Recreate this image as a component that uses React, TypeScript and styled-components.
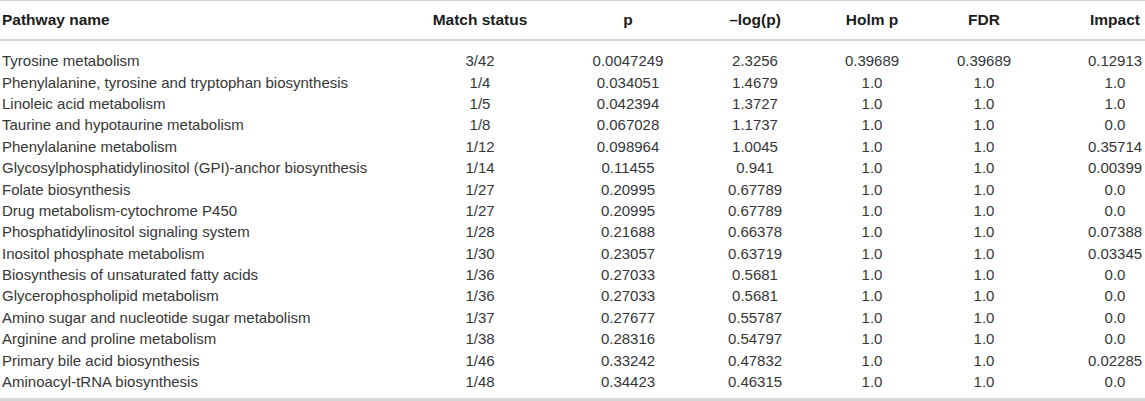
import React from "react";
import styled, { createGlobalStyle } from "styled-components";

const GlobalStyle = createGlobalStyle`
  html, body { margin: 0; padding: 0; background: #ffffff; }
  body { font-family: "Liberation Sans", Arial, Helvetica, sans-serif; }
`;

const COLS = "377px 206px 90px 164px 70px 154px 84px";

const Table = styled.div`
  width: 1145px;
  border-top: 1px solid #cfcfcf;
  border-bottom: 3px solid #d6d6d6;
`;

const HeaderRow = styled.div`
  display: grid;
  grid-template-columns: ${COLS};
  height: 38px;
  align-items: center;
  border-bottom: 2px solid #d4d4d4;
`;

const Body = styled.div`
  padding: 9px 0 6px;
`;

const Row = styled.div`
  display: grid;
  grid-template-columns: ${COLS};
  height: 21.4px;
  align-items: center;
`;

const HeadCell = styled.div<{ $left?: boolean; $inset?: number }>`
  font-size: 15.5px;
  font-weight: 700;
  color: #1c1c1c;
  text-align: ${(p) => (p.$left ? "left" : "center")};
  padding-left: ${(p) => (p.$left ? 2 : p.$inset ?? 0)}px;
  white-space: nowrap;
`;

const Cell = styled.div<{ $left?: boolean; $inset?: number }>`
  font-size: 15px;
  color: #363636;
  text-align: ${(p) => (p.$left ? "left" : "center")};
  padding-left: ${(p) => (p.$left ? 2 : p.$inset ?? 0)}px;
  white-space: nowrap;
`;

const headers = ["Pathway name", "Match status", "p", "\u2013log(p)", "Holm p", "FDR", "Impact"];
const insets = [0, 0, 0, 0, 0, 0, 24];

const rows: string[][] = [
  ["Tyrosine metabolism", "3/42", "0.0047249", "2.3256", "0.39689", "0.39689", "0.12913"],
  ["Phenylalanine, tyrosine and tryptophan biosynthesis", "1/4", "0.034051", "1.4679", "1.0", "1.0", "1.0"],
  ["Linoleic acid metabolism", "1/5", "0.042394", "1.3727", "1.0", "1.0", "1.0"],
  ["Taurine and hypotaurine metabolism", "1/8", "0.067028", "1.1737", "1.0", "1.0", "0.0"],
  ["Phenylalanine metabolism", "1/12", "0.098964", "1.0045", "1.0", "1.0", "0.35714"],
  ["Glycosylphosphatidylinositol (GPI)-anchor biosynthesis", "1/14", "0.11455", "0.941", "1.0", "1.0", "0.00399"],
  ["Folate biosynthesis", "1/27", "0.20995", "0.67789", "1.0", "1.0", "0.0"],
  ["Drug metabolism-cytochrome P450", "1/27", "0.20995", "0.67789", "1.0", "1.0", "0.0"],
  ["Phosphatidylinositol signaling system", "1/28", "0.21688", "0.66378", "1.0", "1.0", "0.07388"],
  ["Inositol phosphate metabolism", "1/30", "0.23057", "0.63719", "1.0", "1.0", "0.03345"],
  ["Biosynthesis of unsaturated fatty acids", "1/36", "0.27033", "0.5681", "1.0", "1.0", "0.0"],
  ["Glycerophospholipid metabolism", "1/36", "0.27033", "0.5681", "1.0", "1.0", "0.0"],
  ["Amino sugar and nucleotide sugar metabolism", "1/37", "0.27677", "0.55787", "1.0", "1.0", "0.0"],
  ["Arginine and proline metabolism", "1/38", "0.28316", "0.54797", "1.0", "1.0", "0.0"],
  ["Primary bile acid biosynthesis", "1/46", "0.33242", "0.47832", "1.0", "1.0", "0.02285"],
  ["Aminoacyl-tRNA biosynthesis", "1/48", "0.34423", "0.46315", "1.0", "1.0", "0.0"],
];

export default function App() {
  return (
    <>
      <GlobalStyle />
      <Table>
        <HeaderRow>
          {headers.map((h, i) => (
            <HeadCell key={h} $left={i === 0} $inset={insets[i]}>
              {h}
            </HeadCell>
          ))}
        </HeaderRow>
        <Body>
          {rows.map((r) => (
            <Row key={r[0]}>
              {r.map((v, i) => (
                <Cell key={i} $left={i === 0} $inset={insets[i]}>
                  {v}
                </Cell>
              ))}
            </Row>
          ))}
        </Body>
      </Table>
    </>
  );
}
